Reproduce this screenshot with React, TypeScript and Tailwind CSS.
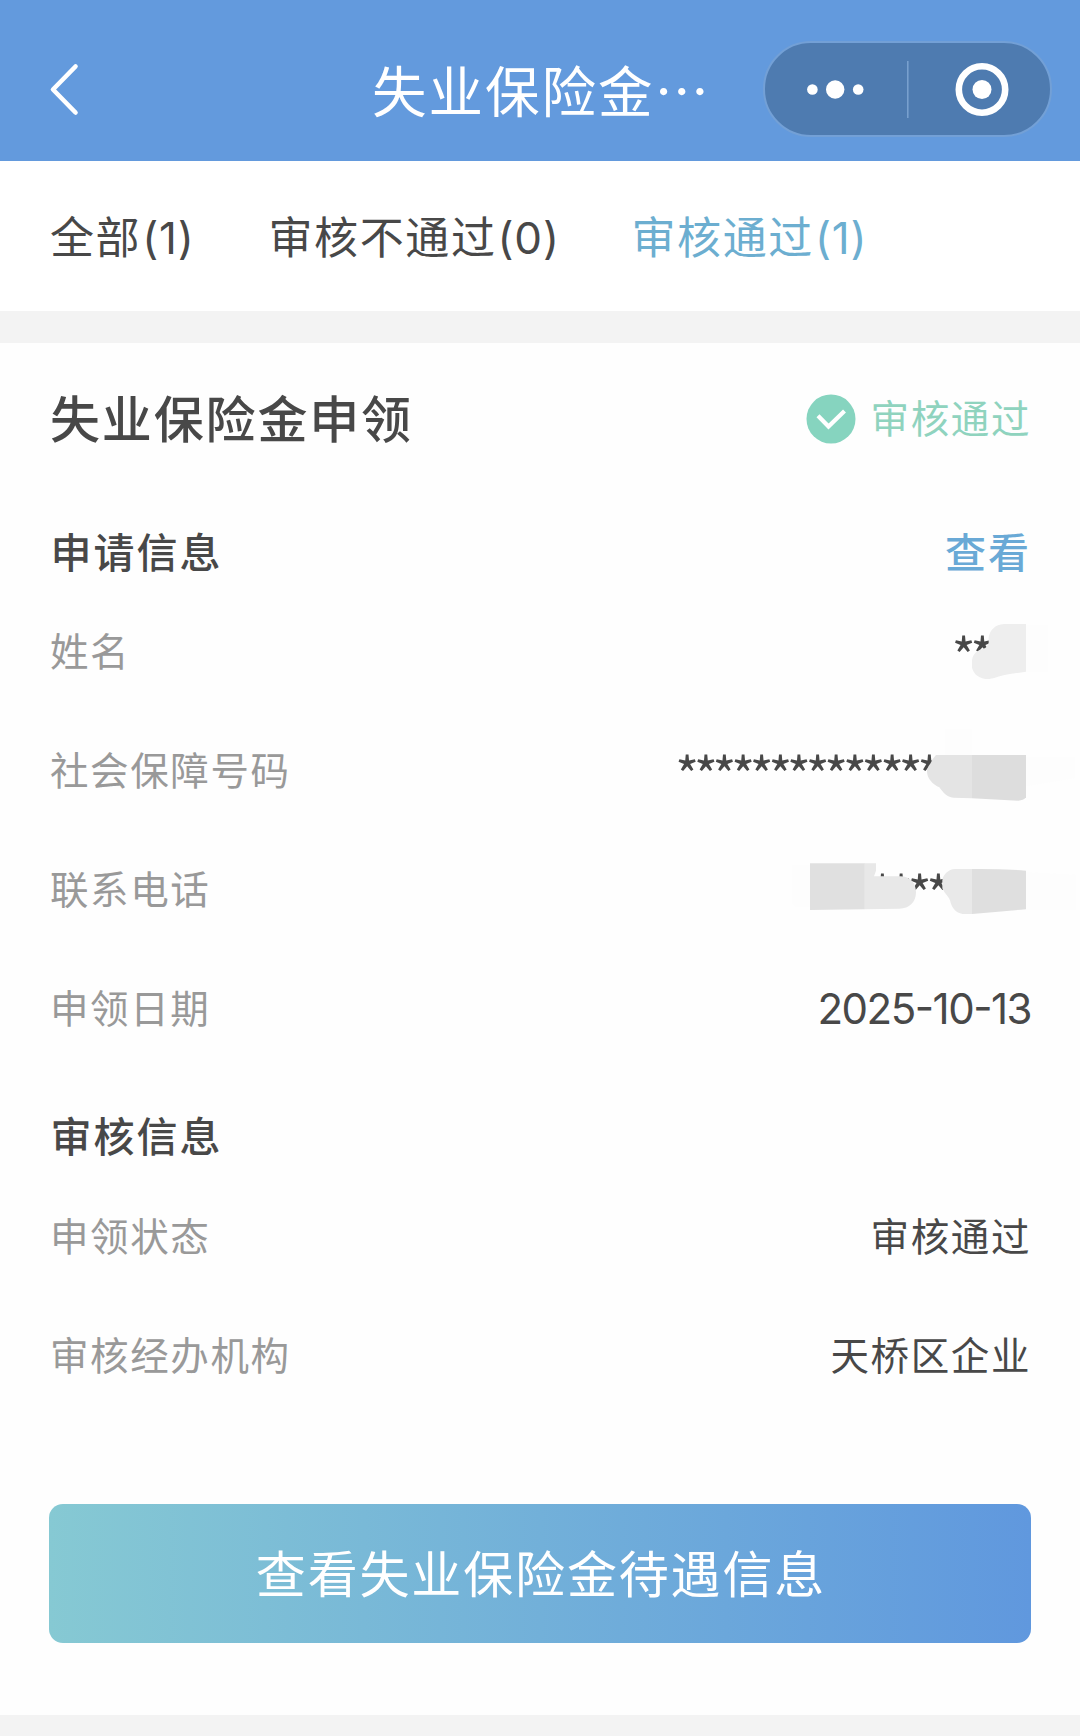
import type { ReactNode } from "react";

type RowProps = {
  label: string;
  children: ReactNode;
  mask?: ReactNode;
};

const latin = "font-['Inter','Noto_Sans_CJK_SC',sans-serif]";
const stars = "relative top-[8px] text-[51px] tracking-[-5.2px]";

function Row({ label, children, mask }: RowProps) {
  return (
    <div className="relative flex h-[119px] items-center justify-between text-[38.5px] leading-[60px] tracking-[1.6px]">
      <span className="-mt-1 ml-px text-[#999999]">{label}</span>
      <span className="-mt-1 text-[#484848]">{children}</span>
      {mask}
    </div>
  );
}

function Header() {
  return (
    <header className="relative flex h-[161px] items-center bg-[#639ADD] pt-[18px] text-white">
      <svg className="ml-[46px] h-[60px] w-9" viewBox="0 0 36 60" fill="none" stroke="currentColor" strokeWidth="4.6" strokeLinecap="round" strokeLinejoin="round">
        <path d="M29.5 6.5L7 29.5l22.500 23" />
      </svg>
      <h1 className="ml-[290px] -mt-0.5 text-[54.5px] leading-[80px] tracking-[2px] whitespace-nowrap">失业保险金…</h1>
      <div className="absolute top-[41px] left-[763px] flex h-24 w-[289px] items-center rounded-full border-2 border-[#73A0D6] bg-[#4E7BB0]">
        <svg className="h-full w-full" viewBox="765 43 285 92" fill="white">
          <circle cx="812.4" cy="89.5" r="5.3" />
          <circle cx="835.2" cy="89.5" r="9.2" />
          <circle cx="858.2" cy="89.5" r="5.3" />
          <path d="M907.8 61v57" stroke="#7BA2D0" strokeWidth="1.5" />
          <circle cx="982" cy="89.5" r="23.2" fill="none" stroke="white" strokeWidth="6.6" />
          <circle cx="982" cy="89.5" r="9.5" />
        </svg>
      </div>
    </header>
  );
}

function Count({ value }: { value: number }) {
  return <span className={`ml-px text-[44px] tracking-[0.8px] ${latin}`}>({value})</span>;
}

function Tabs() {
  return (
    <nav className="flex h-[150px] items-center bg-white pl-[50px] text-[44px] leading-[60px] tracking-[1.6px] whitespace-nowrap text-[#484848]">
      <span className="w-[218.5px]">全部<Count value={1} /></span>
      <span className="w-[363px]">审核不通过<Count value={0} /></span>
      <span className="text-[#6CAED0]">审核通过<Count value={1} /></span>
    </nav>
  );
}

function NameMask() {
  return (
    <svg className="absolute top-0 -right-[49px] h-[119px] w-[440px]" viewBox="0 -27 1320 357">
      <path d="M1158 74h66v141h-66z" fill="#fdfdfd" />
      <path d="M1158 72H1092C1065 74 1050 90 1046 112V128C1043 143 1030 147 1020 149C1005 156 996 168 996 185V203C1002 225 1020 238 1048 237C1068 234 1085 226 1105 223L1158 215Z" fill="#eeeeee" />
    </svg>
  );
}

function IdMask() {
  return (
    <svg className="absolute top-0 -right-[49px] h-[119px] w-[440px]" viewBox="0 330 1320 357">
      <path d="M915 388h80v77h-80zM1158 470h145v65l-145 24z" fill="#fdfdfd" />
      <path d="M888 465H996V595L940 593C920 592 910 578 898 562C880 553 862 538 861 515C861 497 874 492 876 480Z" fill="#e4e4e4" />
      <path d="M996 465H1158V592Q1150 602 1135 602L996 595Z" fill="#dddddd" />
    </svg>
  );
}

function PhoneMask() {
  return (
    <svg className="absolute top-0 -right-[49px] h-[119px] w-[440px]" viewBox="0 687 1320 357">
      <path d="M457 794h53v128h-30q-18 0-23-12zM1158 816l150 8v106h-150z" fill="#fdfdfd" />
      <path d="M672 790H708V812L702 829H780C812 829 828 850 828 877C828 906 808 926 778 926L672 928Z" fill="#e8e8e8" />
      <path d="M510 790H673V928L510 930Z" fill="#e0e0e0" />
      <path d="M996 807H945C925 808 910 824 907 840V865C912 880 930 892 932 908C938 930 955 942 975 942H996Z" fill="#e9e9e9" />
      <path d="M996 807Q1080 806 1158 812V928Q1080 934 996 942Z" fill="#dfdfdf" />
    </svg>
  );
}

export default function App() {
  return (
    <div className="flex h-[1736px] w-[1080px] flex-col overflow-hidden bg-[#f3f3f3] font-['Noto_Sans_CJK_SC',sans-serif]">
      <Header />
      <Tabs />
      <main className="mt-8 h-[1372px] bg-[#fefefe] px-[49px]">
        <div className="flex h-[150px] items-center justify-between">
          <h2 className="-mt-1 ml-px text-[50px] leading-[70px] font-medium tracking-[1.85px] text-[#484848]">失业保险金申领</h2>
          <div className="flex items-center text-[38.5px] leading-[60px] tracking-[1.6px] text-[#8FD3BE]">
            <svg className="mt-px mr-[15px] h-[50px] w-[50px]" viewBox="0 0 50 50">
              <circle cx="25" cy="25" r="24.5" fill="#86D4BF" />
              <path d="M12 21.800L22.500 32.500L38.500 17" fill="none" stroke="white" strokeWidth="4.2" />
            </svg>
            <span className="-mt-1">审核通过</span>
          </div>
        </div>
        <section>
          <div className="flex h-[98px] items-center justify-between pt-4 text-[41px] leading-[60px] font-medium tracking-[2px]">
            <h3 className="ml-[1.5px] text-[#484848]">申请信息</h3>
            <button className="text-[#69A9D6]">查看</button>
          </div>
          <Row label="姓名" mask={<NameMask />}><span className={`mr-[42px] ${stars}`}>**</span></Row>
          <Row label="社会保障号码" mask={<IdMask />}><span className={`mr-[95px] ${stars}`}>**************</span></Row>
          <Row label="联系电话" mask={<PhoneMask />}><span className={`mr-[86px] ${stars}`}>****</span></Row>
          <Row label="申领日期"><span className={`relative top-0.5 text-[42px] tracking-[-1.5px] [font-feature-settings:'case'] ${latin}`}>2025-10-13</span></Row>
        </section>
        <section>
          <h3 className="ml-[1.5px] flex h-[109px] items-center pt-6 text-[41px] leading-[60px] font-medium tracking-[2px] text-[#484848]">审核信息</h3>
          <Row label="申领状态">审核通过</Row>
          <Row label="审核经办机构">天桥区企业</Row>
        </section>
        <button className="mt-[90px] flex h-[139px] w-[982px] items-center justify-center rounded-[14px] bg-linear-to-r from-[#86C9D3] via-[#72B0D9] to-[#6098DE] text-[50px] leading-[70px] tracking-[1.85px] text-white">
          <span className="-mt-1.5 ml-0.5">查看失业保险金待遇信息</span>
        </button>
      </main>
    </div>
  );
}
